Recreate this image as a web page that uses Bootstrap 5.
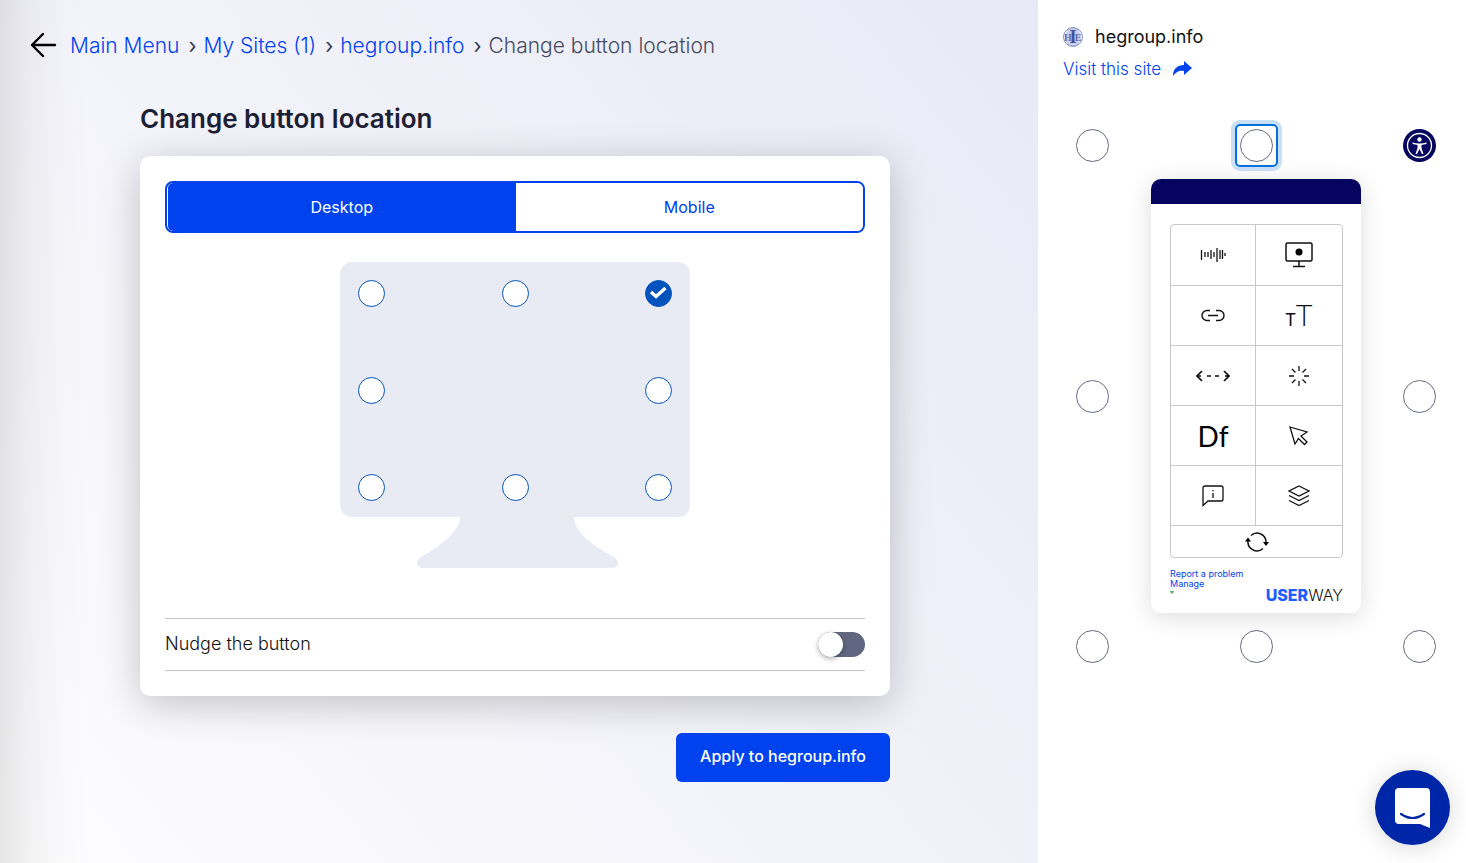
<!DOCTYPE html>
<html lang="en">
<head>
<meta charset="utf-8">
<meta name="viewport" content="width=device-width, initial-scale=1">
<title>Change button location</title>
<link rel="stylesheet" href="https://cdn.jsdelivr.net/npm/bootstrap@5.3.0/dist/css/bootstrap.min.css">
<style>
  :root { --brand: #0042ed; --navy: #05055f; --dot: #0052bd; --screen: #e8ebf3; }
  body { font-family: Inter, "Open Sans", sans-serif; color: #111; background: #fff; }
  a { color: var(--brand); text-decoration: none; }
  .workspace {
    padding: 30px 38px 30px 30px;
    background:
      linear-gradient(90deg, rgba(0,0,0,.09) 0, rgba(0,0,0,.045) 28px, rgba(0,0,0,.012) 60px, transparent 90px),
      linear-gradient(50deg, #fdfdfe 0%, #f7f7fb 28%, #f1f1fa 55%, #eceef7 76%, #e7eaf6 100%);
  }
  .crumbs { font-size: 21px; line-height: 32px; font-weight: 300; }
  .crumbs .breadcrumb-item + .breadcrumb-item { padding-left: 9px; }
  .crumbs .breadcrumb-item + .breadcrumb-item::before { content: "›"; padding-right: 7px; color: #33384f; font-weight: 400; }
  .crumbs .active { color: #454a61; }
  .editor { max-width: 750px; }
  .page-title { font-size: 26px; line-height: 34px; font-weight: 600; color: #1b2033; margin: 40px 0 20px; }
  .panel-box { padding: 25px; border-radius: 10px; background: #fff; box-shadow: 0 8px 40px rgba(0,0,0,.22); }
  .device-tabs { border: 2px solid var(--brand); border-radius: 8px; padding-left: 1px; }
  .device-tabs .btn { height: 48px; border: 0; border-radius: 0; font-size: 16px; color: var(--brand); background: #fff; }
  .device-tabs .btn.active { color: #fff; background: var(--brand); border-radius: 5px 0 0 5px; }
  .monitor { width: 350px; padding: 29px 0 50px; }
  .screen { height: 255px; padding: 18px 18px 16px; border-radius: 12px; background: var(--screen); }
  .spot { appearance: none; width: 27px; height: 27px; margin: 0; border: 1px solid var(--dot); border-radius: 50%; background: #fff; display: block; }
  .spot:checked { background: var(--dot) url("data:image/svg+xml,%3Csvg xmlns='http://www.w3.org/2000/svg' viewBox='0 0 25 25'%3E%3Cpath d='M5 11l5 4.500 9.500-8.500' fill='none' stroke='white' stroke-width='3.400'/%3E%3C/svg%3E") center / 25px; }
  .nudge { height: 53px; border-top: 1px solid #c0c2ce; border-bottom: 1px solid #c0c2ce; font-size: 18px; font-weight: 300; }
  .nudge label { padding-bottom: 3px; }
  .nudge-toggle { appearance: none; width: 47px; height: 25px; border-radius: 13px; background: #616780; margin: 0; display: flex; }
  .nudge-toggle::before { content: ""; width: 25px; height: 25px; border-radius: 50%; background: #fff; box-shadow: 0 2px 5px rgba(0,0,0,.3); }
  .nudge-toggle:checked::before { margin-left: auto; }
  .apply-row { padding-top: 37px; }
  .btn-apply { height: 49px; width: 214px; padding: 6px 12px 9px; border-radius: 6px; background: var(--brand); color: #fff; font-size: 16px; font-weight: 500; }
  .preview { flex: 0 0 428px; padding: 25px; }
  .site-name { font-size: 18px; line-height: 24px; gap: 12px; margin-bottom: 8px; }
  .visit { font-size: 17px; line-height: 24px; font-weight: 300; gap: 12px; }
  .stage { padding: 0 5px 0 13px; margin-top: 48px; }
  .mid { gap: 17px; }
  .place { position: relative; width: 33px; height: 33px; padding: 0; border: 1px solid #666a80; border-radius: 50%; background: #fff; }
  .place.current { border: 0; background: none; }
  .place.focused::after { content: ""; position: absolute; inset: -6px; border: 2px solid #0070dc; border-radius: 5px; box-shadow: 0 0 0 4px #c8dff5; }
  .widget { width: 210px; height: 434px; border-radius: 10px; background: #fff; box-shadow: 0 4px 24px rgba(0,0,0,.14); overflow: hidden; }
  .widget-bar { height: 25px; background: var(--navy); }
  .tiles { display: grid; grid-template-columns: 85px 1fr; grid-template-rows: 61px repeat(4, 60px) 31px; border: 1px solid #c8c8c8; border-radius: 4px; margin: 20px 18px 0 19px; }
  .tile { display: flex; align-items: center; justify-content: center; border-bottom: 1px solid #c8c8c8; color: #111; }
  .tile:nth-child(odd) { border-right: 1px solid #c8c8c8; }
  .tile:last-child { grid-column: 1 / -1; border: 0; }
  .tile svg, .ico { fill: none; stroke: currentColor; }
  .tile-font { font-family: Lato, sans-serif; font-size: 28px; line-height: 32px; color: #000; }
  .tile-size { font-family: Lato, sans-serif; line-height: 32px; padding-top: 3px; }
  .size-s { font-size: 17px; }
  .size-l { font-size: 29px; font-weight: 300; }
  .widget-foot { margin: 11px 18px 0 19px; }
  .tiny { font-size: 9px; line-height: 10px; }
  .logo { font-size: 16px; line-height: 20px; font-weight: 300; color: #111; padding-top: 16px; }
  .logo b { font-weight: 800; color: #1f5cff; }
  .chat { position: fixed; right: 16px; bottom: 18px; width: 75px; height: 75px; padding: 0; border: 0; border-radius: 50%; background: #0026a8; box-shadow: 0 2px 24px rgba(0,0,0,.16); }
</style>
</head>
<body>
<div class="d-flex min-vh-100">
  <main class="workspace flex-grow-1">
    <nav class="d-flex align-items-center" aria-label="breadcrumb">
      <a href="#" class="text-black d-flex me-2 pe-1" aria-label="Back">
        <svg class="ico" width="28" height="28" viewBox="0 0 28 28" stroke-width="2.4" stroke-linecap="round" stroke-linejoin="round"><path d="M13 2L2 13l11 11M2 13h23"/></svg>
      </a>
      <ol class="breadcrumb crumbs mb-0">
        <li class="breadcrumb-item"><a href="#">Main Menu</a></li>
        <li class="breadcrumb-item"><a href="#">My Sites (1)</a></li>
        <li class="breadcrumb-item"><a href="#">hegroup.info</a></li>
        <li class="breadcrumb-item active" aria-current="page">Change button location</li>
      </ol>
    </nav>
    <div class="editor mx-auto">
      <h1 class="page-title">Change button location</h1>
      <section class="panel-box">
        <div class="device-tabs d-flex overflow-hidden" role="group" aria-label="Device">
          <button type="button" class="btn w-50 active">Desktop</button>
          <button type="button" class="btn w-50">Mobile</button>
        </div>
        <div class="monitor mx-auto">
          <div class="screen d-flex flex-column justify-content-between">
            <div class="d-flex justify-content-between">
              <input class="spot" type="radio" name="spot" aria-label="Top left">
              <input class="spot" type="radio" name="spot" aria-label="Top center">
              <input class="spot" type="radio" name="spot" aria-label="Top right" checked>
            </div>
            <div class="d-flex justify-content-between">
              <input class="spot" type="radio" name="spot" aria-label="Middle left">
              <input class="spot" type="radio" name="spot" aria-label="Middle right">
            </div>
            <div class="d-flex justify-content-between">
              <input class="spot" type="radio" name="spot" aria-label="Bottom left">
              <input class="spot" type="radio" name="spot" aria-label="Bottom center">
              <input class="spot" type="radio" name="spot" aria-label="Bottom right">
            </div>
          </div>
          <svg class="d-block mx-auto" width="206" height="51" viewBox="-5 0 206 51"><path d="M43 0C43 14 25 28 4 40Q0 43 0 46Q0 51 7 51H194Q201 51 201 46Q201 43 197 40C175 28 157 15 157 0Z" fill="#e8ebf3"/></svg>
        </div>
        <div class="nudge d-flex align-items-center justify-content-between">
          <label for="nudge">Nudge the button</label>
          <input class="nudge-toggle" type="checkbox" role="switch" id="nudge">
        </div>
      </section>
      <div class="apply-row d-flex justify-content-end">
        <button type="button" class="btn btn-apply">Apply to hegroup.info</button>
      </div>
    </div>
  </main>
  <aside class="preview">
    <div class="site-name d-flex align-items-center">
      <svg width="20" height="20" viewBox="0 0 20 20"><circle cx="10" cy="10" r="9.400" fill="#c8d0ee" stroke="#7e86bd"/><path d="M4 4a9 9 0 0 0 0 12M16 4a9 9 0 0 1 0 12" fill="none" stroke="#eef1fb" stroke-width="1.200"/><g font-family="Liberation Serif, serif" font-weight="700" text-anchor="middle"><text x="5" y="13.500" font-size="10" fill="#6670ad">H</text><text x="15" y="13.500" font-size="10" fill="#6670ad">E</text><text x="10" y="16" font-size="18" fill="#46509a">I</text></g></svg>
      <span>hegroup.info</span>
    </div>
    <a href="#" class="visit d-inline-flex align-items-center">Visit this site
      <svg width="19" height="16" viewBox="0 0 19 16"><path d="M11 0l8 7-8 7v-4C6 9 3 11 0 15 0 8 4 4 11 4z" fill="#0042ed"/></svg>
    </a>
    <div class="stage d-flex justify-content-between">
      <div class="d-flex flex-column justify-content-between">
        <button type="button" class="place" aria-label="Top left"></button>
        <button type="button" class="place" aria-label="Middle left"></button>
        <button type="button" class="place" aria-label="Bottom left"></button>
      </div>
      <div class="mid d-flex flex-column align-items-center">
        <button type="button" class="place focused" aria-label="Top center"></button>
        <div class="widget">
          <div class="widget-bar"></div>
          <div class="tiles">
            <div class="tile"><svg width="26" height="20" viewBox="0 0 26 20" stroke-width="1.300"><path d="M1.500 5v10M5 7v5M8 7v5M11 5v9M14 7v5M17 3v14M20 5v9M22.500 5v9M25 8v3"/></svg></div>
            <div class="tile"><svg width="28" height="26" viewBox="0 0 28 26" stroke-width="1.500"><rect x="1" y="1" width="26" height="18" rx="1.500"/><path d="M14 19v5M8 24.500h12"/><circle cx="14" cy="10" r="3.500" fill="#000" stroke="none"/></svg></div>
            <div class="tile"><svg width="26" height="14" viewBox="0 0 26 14" stroke-width="1.400"><path d="M10 1.500H7a5 5 0 0 0 0 10h3M16 1.500h3a5 5 0 0 1 0 10h-3M8 6.500h10"/></svg></div>
            <div class="tile tile-size"><span><span class="size-s">T</span><span class="size-l">T</span></span></div>
            <div class="tile"><svg width="34" height="12" viewBox="0 0 34 12" stroke-width="1.700"><path d="M6 1L1 6l5 5M1 6h4M11 6h4M19 6h4M28 1l5 5-5 5M33 6h-4"/></svg></div>
            <div class="tile"><svg width="22" height="22" viewBox="0 0 22 22" stroke-width="1.300"><path d="M11 1v5M11 16v5M1 11h5M16 11h5M4 4l3.500 3.500M14.500 14.500L18 18M18 4l-3.500 3.500M7.500 14.500L4 18"/></svg></div>
            <div class="tile tile-font">Df</div>
            <div class="tile"><svg width="20" height="20" viewBox="0 0 20 20" stroke-width="1.300"><path d="M1 1l17 5-6 4 6 6-2.500 2.500-6-6L6 18z"/></svg></div>
            <div class="tile"><svg width="22" height="22" viewBox="0 0 22 22" stroke-width="1.300"><path d="M1 20.500V3q0-2 2-2h16q2 0 2 2v11q0 2-2 2H6zM11 8v5M11 5v1.300"/></svg></div>
            <div class="tile"><svg width="22" height="22" viewBox="0 0 22 22" stroke-width="1.300"><path d="M11 1l10 5-10 5L1 6zM1 10.500l10 5 10-5M1 15.500l10 5 10-5"/></svg></div>
            <div class="tile"><svg width="24" height="22" viewBox="0 0 24 22" stroke-width="1.500"><path d="M6 4.500a9 9 0 0 1 15 7M18 17.500A9 9 0 0 1 3 10"/><path d="M0 10.500l3-4 3 4zM18 11h6l-3 4z" fill="#000" stroke="none"/></svg></div>
          </div>
          <div class="widget-foot d-flex justify-content-between align-items-start">
            <div class="tiny d-flex flex-column"><a href="#">Report a problem</a><a href="#">Manage</a><svg width="4" height="12" viewBox="0 0 4 12"><path d="M0 2h4v1L2 5 0 3z" fill="#66b36e"/></svg></div>
            <div class="logo"><b>USER</b>WAY</div>
          </div>
        </div>
        <button type="button" class="place" aria-label="Bottom center"></button>
      </div>
      <div class="d-flex flex-column justify-content-between">
        <button type="button" class="place current" aria-label="Top right"><svg class="d-block" width="33" height="33" viewBox="0 0 33 33"><circle cx="16.500" cy="16.500" r="16.500" fill="#05055f"/><circle cx="16.500" cy="16.500" r="12" fill="none" stroke="#fff" stroke-width="1.300"/><circle cx="16.500" cy="10.500" r="2.200" fill="#fff"/><path d="M9.500 13.500Q16.500 15.500 23.500 13.500V15L18.500 16V19L20.500 25H19L16.500 20L14 25H12.500L14.500 19V16L9.500 15Z" fill="#fff"/></svg></button>
        <button type="button" class="place" aria-label="Middle right"></button>
        <button type="button" class="place" aria-label="Bottom right"></button>
      </div>
    </div>
  </aside>
</div>
<button type="button" class="chat" aria-label="Open chat"><svg width="36" height="40" viewBox="0 0 36 40"><path d="M4 0h27q4 0 4 4v36l-10-4H4q-4 0-4-4V4q0-4 4-4z" fill="#fff"/><path d="M6 26q11.500 8 23 0" fill="none" stroke="#0026a8" stroke-width="2.200" stroke-linecap="round"/></svg></button>
<script src="https://cdn.jsdelivr.net/npm/bootstrap@5.3.0/dist/js/bootstrap.bundle.min.js"></script>
</body>
</html>
